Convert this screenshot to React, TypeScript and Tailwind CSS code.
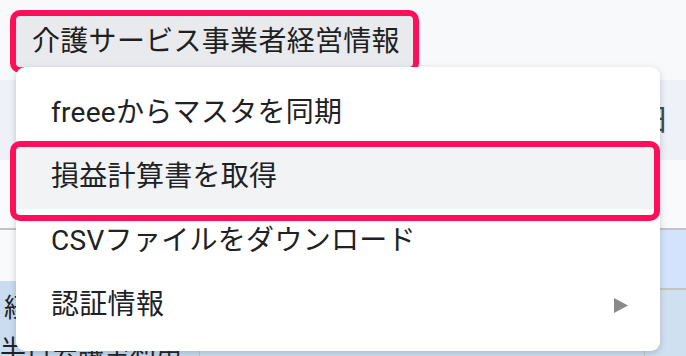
const items = [
  { label: 'freeeからマスタを同期' },
  { label: '損益計算書を取得', active: true },
  { label: 'CSVファイルをダウンロード' },
  { label: '認証情報', submenu: true },
];

export default function App() {
  return (
    <div
      className="relative h-[356px] w-[686px] overflow-hidden bg-[#f8f9fb] text-[#202124]"
      style={{ fontFamily: 'Roboto, "Noto Sans CJK JP", sans-serif' }}
    >
      {/* sheet behind the menu */}
      <div className="flex h-full flex-col">
        <div className="h-[80px] bg-[#f8f9fb]" />
        <div className="flex h-[80px] items-center justify-end bg-[#eef1f8] pr-[17px]">
          <span className="text-[30px] leading-none text-[#444746]">日</span>
        </div>
        <div className="h-[70px] border-b-2 border-[#c3c3c3] bg-[#f9fafb]" />
        <div className="flex flex-1">
          <div className="flex w-[200px] flex-col border-r border-[#c3c3c3]">
            <div className="h-[51px] bg-[#f9fafb]" />
            <div className="relative flex-1 bg-[#c9dcf0]">
              <span className="absolute left-[4px] top-[14px] text-[26px] leading-none">経</span>
              <span className="absolute left-0 top-[56px] whitespace-nowrap text-[26px] leading-none">
                半日会議室利用
              </span>
            </div>
          </div>
          <div className="flex flex-1 flex-col">
            <div className="h-[60px] border-b-2 border-[#c3c3c3] bg-[#d3e3fd]" />
            <div className="flex flex-1">
              <div className="w-[445px] border-r border-[#c3c3c3] bg-[#cfe0f1]" />
              <div className="flex-1 bg-[#cfe0f1]" />
            </div>
          </div>
        </div>
      </div>

      {/* menu bar button */}
      <div className="absolute left-[10px] top-[10px] flex h-[63px] w-[409px] items-center rounded-[10px] border-[6px] border-[#ff0f5a] bg-[#e8eaed] pl-[16px]">
        <span className="whitespace-nowrap text-[28px] leading-none tracking-[0.3px] text-[#1f1f1f]">
          介護サービス事業者経営情報
        </span>
      </div>

      {/* dropdown */}
      <div className="absolute left-[16px] top-[67px] w-[644px] rounded-[9px] bg-white py-[14px] shadow-[0_2px_6px_rgba(60,64,67,0.25)]">
        {items.map((it) => (
          <div
            key={it.label}
            className={
              'flex h-[64px] items-center justify-between pl-[35px] pr-[32px] ' +
              (it.active ? 'bg-[#f1f3f4]' : '')
            }
          >
            <span className="whitespace-nowrap text-[28px] leading-none tracking-[0.3px] text-[#202124]">
              {it.label}
            </span>
            {it.submenu && (
              <svg width="14" height="15" viewBox="0 0 14 15">
                <path d="M0 0 L14 7.5 L0 15 Z" fill="#8a8a8a" />
              </svg>
            )}
          </div>
        ))}
      </div>

      {/* highlight annotation */}
      <div className="pointer-events-none absolute left-[10px] top-[141px] h-[80px] w-[650px] rounded-[10px] border-[6px] border-[#ff0f5a]" />
    </div>
  );
}
